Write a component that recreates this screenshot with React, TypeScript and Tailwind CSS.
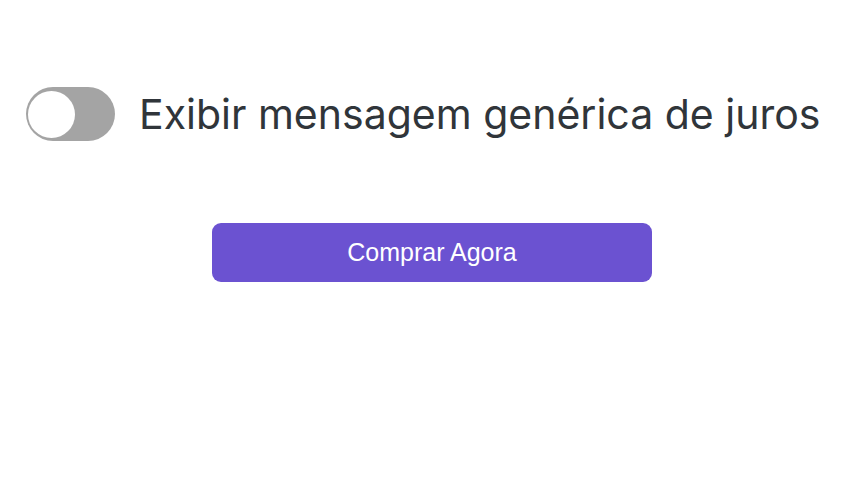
export default function App() {
  return (
    <div className="min-h-[500px] w-full bg-white pt-[87px]">
      <div className="flex items-center gap-[24px] pl-[26px]">
        <button className="flex h-[54px] w-[89px] items-center rounded-full bg-[#a4a4a4] pl-[2px]">
          <span className="block size-[47px] rounded-full bg-white" />
        </button>
        <span className="font-['Inter',sans-serif] text-[41px] leading-none text-[#30353a]">
          Exibir mensagem genérica de juros
        </span>
      </div>
      <div className="mt-[82px] flex justify-center">
        <button className="h-[59px] w-[440px] rounded-[9px] bg-[#6b52d1] font-['Liberation_Sans',Arial,sans-serif] text-[25px] text-white">
          Comprar Agora
        </button>
      </div>
    </div>
  );
}
